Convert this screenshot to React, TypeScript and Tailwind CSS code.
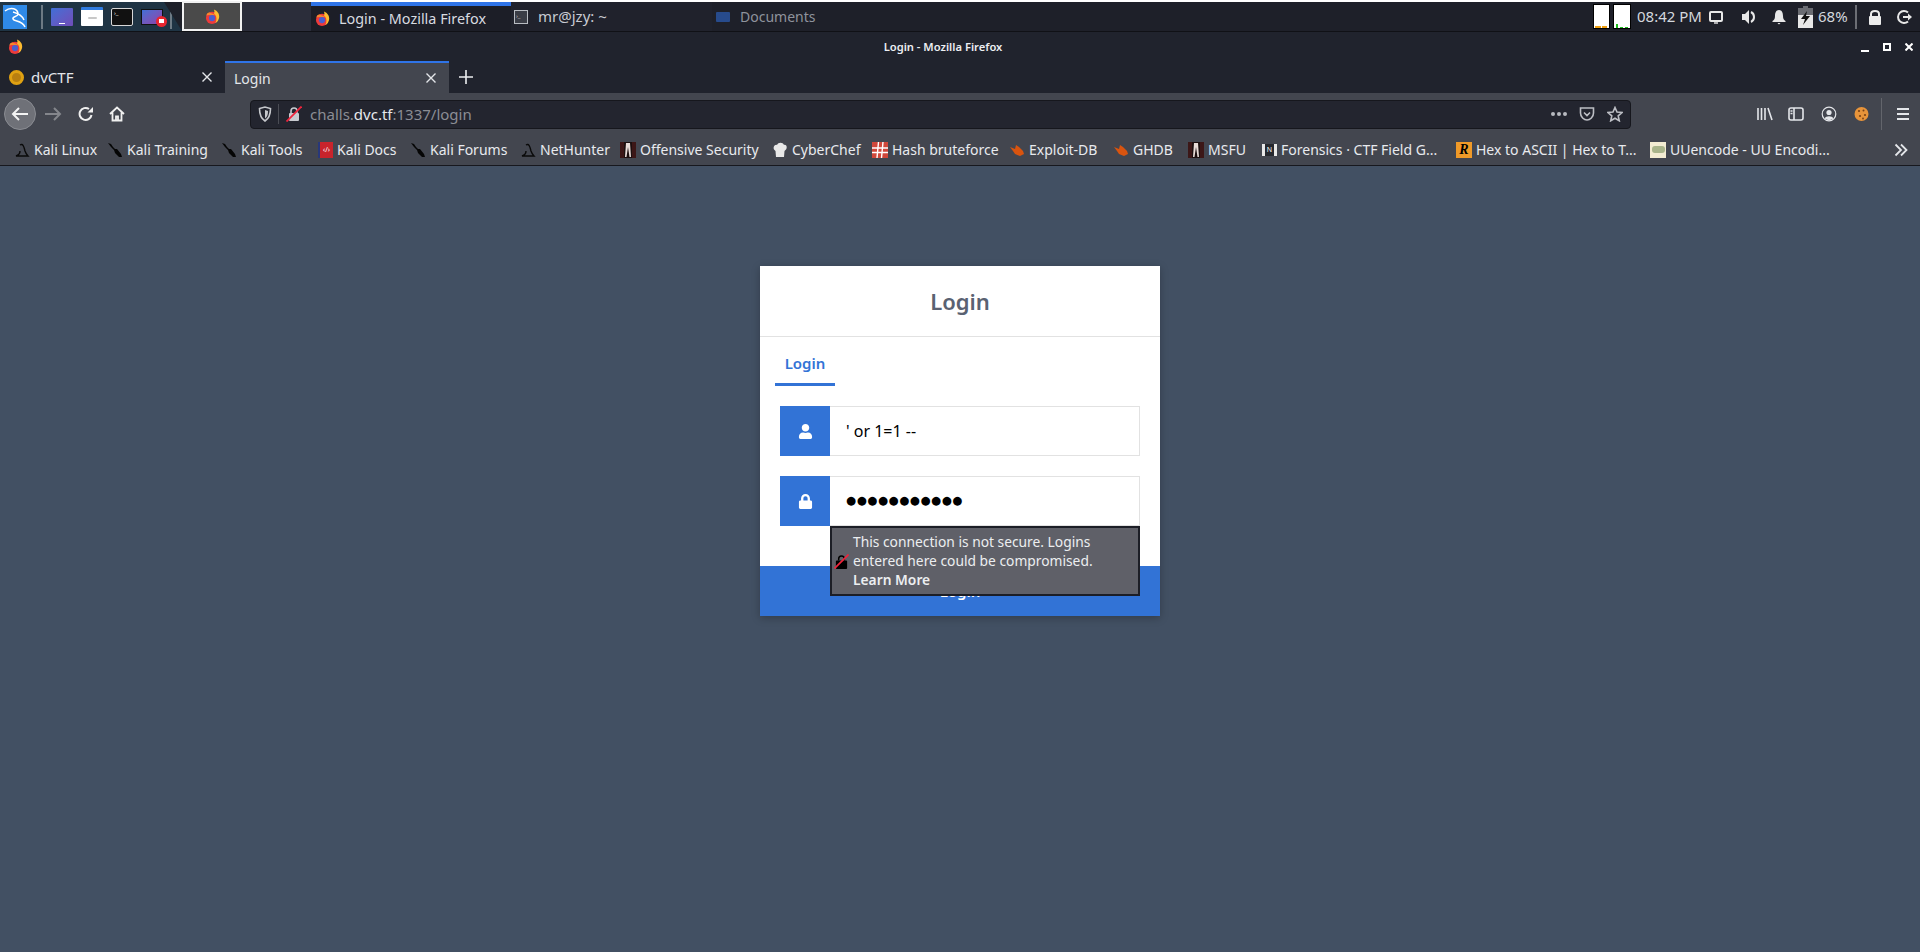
import type { ReactNode } from "react";
import { FaLock, FaUser } from "react-icons/fa";

const uiFont = "font-['Noto_Sans',sans-serif]";

const FirefoxIcon = ({ size = 16 }: { size?: number }) => (
  <svg width={size} height={size} viewBox="0 0 16 16" className="shrink-0">
    <circle cx="7.500" cy="9.500" r="6.500" fill="#ee3b3b" />
    <path d="M1.500 7 C2 4 4 3.500 5.500 4 C7 5 10 5 12 7 C10 6.500 5 6 1.500 7Z" fill="#f8862c" />
    <path d="M9.500 0.500 C13.500 2 16.500 6 14.500 11 C13.500 14 12 14.500 11 15 C13 11 12.500 7 9.500 4.500 C10.500 3.500 10 2 9.500 0.500Z" fill="#fdbb30" />
    <circle cx="7.500" cy="9.700" r="3.300" fill="#4a5fd0" />
  </svg>
);

const KaliSword = () => (
  <svg width="16" height="16" viewBox="0 0 16 16" className="shrink-0">
    <path d="M1 1 L4 2 L6 5 L8 7 L10 7 L14 12 L15 15 L12 15 L8 11 L7 8 L4 5 Z" fill="#050505" />
  </svg>
);

const KaliHat = () => (
  <svg width="16" height="16" viewBox="0 0 16 16" className="shrink-0" fill="none">
    <path d="M6 3 C9 1 10 5 11 9 C12 12 13 13 14 14 L2 14 C5 13 6 11 6 9" stroke="#0a0a0a" strokeWidth="1.400" />
  </svg>
);

const StripedIcon = () => (
  <svg width="16" height="16" viewBox="0 0 16 16" className="shrink-0">
    <rect width="16" height="16" fill="#1c0f0f" />
    <path d="M6 1 H10 L11 15 H9.500 L8 5 L6.500 15 H5 Z" fill="#e8dcd8" />
    <path d="M1 0 V16 M3 0 V16 M13 0 V16 M15 0 V16" stroke="#5c2020" />
  </svg>
);

const ExploitIcon = () => (
  <svg width="16" height="16" viewBox="0 0 16 16" className="shrink-0">
    <path d="M1 5 L6 7 L7 3 L10 5 L14 9 L15 12 L11 14 L6 12 L4 9 Z" fill="#d9540f" />
  </svg>
);

const Bookmark = ({ icon, label, width }: { icon: ReactNode; label: string; width: string }) => (
  <div className={`flex items-center gap-[4px] shrink-0 ${width}`}>
    {icon}
    <span className="text-[14px] text-[#e8eaee] whitespace-nowrap">{label}</span>
  </div>
);

const TopPanel = () => (
  <div className="flex h-[32px] border-t-2 border-white bg-[#1e2029] shrink-0 border-b border-b-[#101116]">
    <div className="flex items-center w-[182px] bg-[#1f3444] [clip-path:polygon(0_0,164px_0,182px_100%,0_100%)]">
      <svg width="24" height="24" viewBox="0 0 24 24" className="ml-[3px] shrink-0">
        <rect width="24" height="24" fill="#2f8ae8" />
        <path d="M2 6 C8 1 15 4 15 9 C15 12 9 11 10 14 C11 17 19 15 22 22 M10 7 C14 8 19 10 21 15" fill="none" stroke="#fff" strokeWidth="1.500" />
      </svg>
      <div className="w-[2px] h-[24px] bg-[#6d7a84] ml-[14px]" />
      <div className="flex items-end justify-center w-[22px] h-[18px] ml-[8px] rounded-[1px] bg-gradient-to-br from-[#3d6fd6] to-[#6f4cb8] pb-[2px]">
        <div className="w-[6px] h-[1px] bg-white" />
      </div>
      <div className="flex items-center justify-center w-[22px] h-[19px] ml-[8px] bg-white rounded-[1px] border-t-[3px] border-[#2f7be0]">
        <div className="w-[9px] h-[2px] rounded-full bg-[#c8c8c8]" />
      </div>
      <div className="w-[22px] h-[18px] ml-[8px] bg-[#111] rounded-[2px] border border-[#d8d8d8] text-[6px] leading-[8px] text-white pl-[2px]">›_</div>
      <div className="relative w-[22px] h-[16px] ml-[8px] bg-gradient-to-br from-[#3d6fd6] to-[#8a3fa8] border border-[#111]">
        <div className="absolute -right-[5px] top-[6px] flex items-center justify-center w-[11px] h-[11px] rounded-full bg-[#e8252f]">
          <div className="w-[5px] h-[4px] bg-white" />
        </div>
      </div>
      <div className="w-[2px] h-[24px] bg-[#6d7a84] ml-[7px]" />
    </div>
    <div className="flex w-[60px] items-center justify-center bg-[#4a4a4a] border-2 border-[#f2f2f2] -mt-[1px]">
      <FirefoxIcon size={15} />
    </div>
    <div className="w-[69px] bg-[#2b2d3a]" />
    <div className="flex items-center w-[200px] border-t-4 border-[#2f74e8] pl-[4px] gap-[9px] bg-[#1c1e27]">
      <FirefoxIcon size={15} />
      <span className="text-[14.4px] text-[#d8dbe0] whitespace-nowrap">Login - Mozilla Firefox</span>
    </div>
    <div className="flex items-center w-[201px] pl-[3px] gap-[10px] bg-[#20222c]">
      <div className="w-[14px] h-[14px] border border-[#b8bcc2] bg-[#3a3d46] text-[6px] leading-[10px] text-[#d0d0d0] pl-[1px]">›_</div>
      <span className="text-[15px] text-[#c8cbd2]">mr@jzy: ~</span>
    </div>
    <div className="flex items-center pl-[4px] gap-[10px]">
      <div className="w-[14px] h-[10px] bg-[#274b8c] rounded-[1px]" />
      <span className="text-[14px] text-[#8f939c]">Documents</span>
    </div>
    <div className="ml-auto flex items-center">
      <div className="w-[17px] h-[25px] bg-white border border-black flex items-end">
        <div className="h-[2px] w-[6px] bg-[#f0a010] ml-[1px]" />
        <div className="h-[2px] w-[5px] bg-[#f0a010] ml-[1px]" />
      </div>
      <div className="w-[18px] h-[25px] bg-white border border-black ml-[3px] flex items-end gap-[2px]">
        <div className="h-[4px] w-[2px] bg-[#20c020] ml-[2px]" />
        <div className="h-[1px] w-[3px] bg-[#20c020]" />
        <div className="h-[1px] w-[3px] bg-[#20c020]" />
      </div>
      <span className="ml-[6px] text-[15px] text-[#d4d8de] whitespace-nowrap w-[70px]">08:42 PM</span>
      <svg width="16" height="16" viewBox="0 0 16 16" className="ml-[1px]" fill="none">
        <rect x="2" y="3" width="12" height="9" rx="1" stroke="#e8e8e8" strokeWidth="2" />
        <path d="M6 14 H10" stroke="#e8e8e8" strokeWidth="1.400" />
      </svg>
      <svg width="16" height="16" viewBox="0 0 16 16" className="ml-[17px]">
        <path d="M1 5 H4 L8 1 V15 L4 11 H1 Z" fill="#e8e8e8" />
        <path d="M10 3 C14 5 14 11 10 13" fill="none" stroke="#e8e8e8" strokeWidth="2" />
      </svg>
      <svg width="16" height="16" viewBox="0 0 16 16" className="ml-[14px]">
        <path d="M8 1 C5 1 4 4 4 7 C4 10 3 11 1.500 12 V13 H14.500 V12 C13 11 12 10 12 7 C12 4 11 1 8 1 Z M6.500 14 H9.500 L8 15.500 Z" fill="#e8e8e8" />
      </svg>
      <svg width="15" height="22" viewBox="0 0 15 22" className="ml-[11px]">
        <path d="M5 0 H10 V2 H15 V22 H0 V2 H5 Z" fill="#6a6c72" />
        <path d="M0 9 H15 V22 H0 Z" fill="#e8e8e8" />
        <path d="M9 5 L3 13 H7 L5 19 L12 10 H8 Z" fill="#111" />
      </svg>
      <span className="ml-[5px] text-[15px] text-[#d4d8de] w-[36px]">68%</span>
      <div className="w-[2px] h-[24px] bg-[#6c6e74] ml-[1px]" />
      <svg width="14" height="16" viewBox="0 0 14 16" className="ml-[11px]">
        <path d="M3 7 V5 C3 1 11 1 11 5 V7" fill="none" stroke="#ececec" strokeWidth="2" />
        <rect x="1" y="7" width="12" height="9" rx="1" fill="#ececec" />
      </svg>
      <svg width="16" height="16" viewBox="0 0 16 16" className="ml-[15px] mr-[7px]" fill="none">
        <path d="M11 3.500 A6 6 0 1 0 11 12.500" stroke="#e8e8e8" strokeWidth="2" />
        <path d="M6 8 H12" stroke="#e8e8e8" strokeWidth="2" />
        <path d="M11 4.500 L15 8 L11 11.500 Z" fill="#e8e8e8" />
      </svg>
    </div>
  </div>
);

const TitleBar = () => (
  <div className="relative flex items-center h-[28px] bg-[#20232d] shrink-0 pl-[8px]">
    <FirefoxIcon size={15} />
    <span className="absolute left-0 right-[34px] top-[7px] text-center text-[11.2px] font-semibold text-[#eceef2]">Login - Mozilla Firefox</span>
    <div className="ml-auto flex items-center mr-[7px] mt-[2px]">
      <div className="w-[8px] h-[2px] bg-white mt-[7px]" />
      <div className="w-[8px] h-[8px] border-2 border-white ml-[14px]" />
      <svg width="8" height="8" viewBox="0 0 8 8" className="ml-[14px]">
        <path d="M0.500 0.500 L7.500 7.500 M7.500 0.500 L0.500 7.500" stroke="#fff" strokeWidth="2" />
      </svg>
    </div>
  </div>
);

const CloseGlyph = () => (
  <svg width="10" height="10" viewBox="0 0 10 10">
    <path d="M0.500 0.500 L9.500 9.500 M9.500 0.500 L0.500 9.500" stroke="#e4e6ea" strokeWidth="1.400" />
  </svg>
);

const TabStrip = () => (
  <div className="flex h-[33px] bg-[#20232d] shrink-0 border-t border-[#20232d]">
    <div className="flex items-center w-[225px] pl-[9px] pr-[13px]">
      <div className="w-[15px] h-[15px] rounded-full bg-[#b87f10] border-[3px] border-[#dfa112]" />
      <span className="ml-[7px] text-[15px] text-[#e4e6ea]">dvCTF</span>
      <div className="ml-auto"><CloseGlyph /></div>
    </div>
    <div className="flex items-center w-[224px] pl-[9px] pr-[13px] bg-[#43464f] border-t-2 border-[#2f74e8]">
      <span className="text-[14px] text-[#e4e6ea]">Login</span>
      <div className="ml-auto"><CloseGlyph /></div>
    </div>
    <svg width="14" height="14" viewBox="0 0 14 14" className="ml-[10px] self-center">
      <path d="M7 0 V14 M0 7 H14" stroke="#eceef0" strokeWidth="1.600" />
    </svg>
  </div>
);

const Toolbar = () => (
  <div className="flex items-center h-[38px] bg-[#43464f] shrink-0 pl-[4px] pt-[4px]">
    <div className="flex items-center justify-center w-[32px] h-[32px] rounded-full bg-[#6f7178] border border-[#8a8c92]">
      <svg width="18" height="16" viewBox="0 0 18 16" fill="none" stroke="#f4f4f4" strokeWidth="2">
        <path d="M17 8 H2 M8 2 L2 8 L8 14" />
      </svg>
    </div>
    <svg width="18" height="16" viewBox="0 0 18 16" fill="none" stroke="#84868c" strokeWidth="2" className="ml-[8px]">
      <path d="M1 8 H16 M10 2 L16 8 L10 14" />
    </svg>
    <svg width="16" height="16" viewBox="0 0 16 16" fill="none" className="ml-[16px]">
      <path d="M13.500 9 A6 6 0 1 1 11 3" stroke="#f0f0f0" strokeWidth="2" />
      <path d="M9.500 6.500 H15 V1 Z" fill="#f0f0f0" />
    </svg>
    <svg width="16" height="16" viewBox="0 0 16 16" fill="none" stroke="#f0f0f0" strokeWidth="1.800" className="ml-[15px]">
      <path d="M1 8 L8 1.500 L15 8 M3.500 6.500 V14.500 H12.500 V6.500 M7 14.500 V10.500 H9 V14.500" />
    </svg>
    <div className="flex items-center w-[1381px] h-[29px] ml-[125px] bg-[#23252f] rounded-[4px] border border-[#16171d] pl-[7px] pr-[7px]">
      <svg width="14" height="16" viewBox="0 0 14 16" fill="none">
        <path d="M1.500 2.500 L7 1 L12.500 2.500 C12.500 9 11 12.500 7 15 C3 12.500 1.500 9 1.500 2.500 Z" stroke="#c6c8cc" strokeWidth="1.600" />
        <path d="M7 4 L10 5 C10 9 9 11 7 12.500 Z" fill="#c6c8cc" />
      </svg>
      <div className="w-[1px] h-[20px] bg-[#4b4d55] ml-[6px]" />
      <svg width="16" height="16" viewBox="0 0 16 16" className="ml-[7px]">
        <path d="M5 7 V5 C5 1 11 1 11 5 V7" fill="none" stroke="#c8cad0" strokeWidth="1.600" />
        <rect x="3" y="7" width="10" height="8" rx="1" fill="#c8cad0" />
        <path d="M0.500 15.500 L15.500 0.500" stroke="#f0243c" strokeWidth="1.800" />
      </svg>
      <span className="ml-[8px] text-[15px] text-[#8b8d94] whitespace-nowrap">
        challs.<span className="text-[#e6e8ec]">dvc.tf</span>:1337/login
      </span>
      <div className="ml-auto flex items-center">
        <div className="flex gap-[2px]">
          <div className="w-[4px] h-[4px] rounded-full bg-[#b8bac0]" />
          <div className="w-[4px] h-[4px] rounded-full bg-[#b8bac0]" />
          <div className="w-[4px] h-[4px] rounded-full bg-[#b8bac0]" />
        </div>
        <svg width="16" height="16" viewBox="0 0 16 16" fill="none" stroke="#bcbec4" strokeWidth="1.600" className="ml-[12px]">
          <path d="M1.500 2 H14.500 V7 C14.500 11 11 14 8 14 C5 14 1.500 11 1.500 7 Z M5 6.500 L8 9.500 L11 6.500" />
        </svg>
        <svg width="16" height="16" viewBox="0 0 16 16" fill="none" stroke="#bcbec4" strokeWidth="1.600" className="ml-[12px]">
          <path d="M8 1.500 L10 6 L15 6.500 L11.200 9.800 L12.300 14.800 L8 12.200 L3.700 14.800 L4.800 9.800 L1 6.500 L6 6 Z" />
        </svg>
      </div>
    </div>
    <div className="flex items-center ml-[126px]">
      <svg width="16" height="16" viewBox="0 0 16 16" fill="none" stroke="#e4e6ea" strokeWidth="1.600">
        <path d="M1 2 V14 M4.500 2 V14 M8 2 V14 M11 2 L15 14" />
      </svg>
      <svg width="16" height="16" viewBox="0 0 16 16" fill="none" stroke="#e4e6ea" strokeWidth="1.600" className="ml-[15px]">
        <rect x="1" y="2" width="14" height="12" rx="2" />
        <path d="M6 2 V14 M2.500 5 H4.500 M2.500 7.500 H4.500" />
      </svg>
      <svg width="16" height="16" viewBox="0 0 16 16" fill="none" className="ml-[17px]">
        <circle cx="8" cy="8" r="6.800" stroke="#e4e6ea" strokeWidth="1.200" />
        <circle cx="8" cy="6.500" r="2.600" fill="#e4e6ea" />
        <path d="M3.500 12.500 C5 9.500 11 9.500 12.500 12.500 L8 14.500 Z" fill="#e4e6ea" />
      </svg>
      <svg width="15" height="16" viewBox="0 0 15 16" className="ml-[17px]">
        <circle cx="7.500" cy="8" r="7" fill="#e8943a" />
        <circle cx="5" cy="5" r="1.100" fill="#7a4214" />
        <circle cx="9.500" cy="4.500" r="1" fill="#7a4214" />
        <circle cx="11" cy="9" r="1.100" fill="#7a4214" />
        <circle cx="6" cy="10" r="1.100" fill="#7a4214" />
        <circle cx="9" cy="12.500" r="0.900" fill="#7a4214" />
      </svg>
      <div className="w-[1px] h-[32px] bg-[#63656c] ml-[12px]" />
      <svg width="12" height="14" viewBox="0 0 12 14" stroke="#e4e6ea" strokeWidth="2" className="ml-[15px]">
        <path d="M0 2 H12 M0 7 H12 M0 12 H12" />
      </svg>
    </div>
  </div>
);

const BookmarksBar = () => (
  <div className="flex items-center h-[35px] pt-[3px] bg-[#43464f] border-b border-[#17181e] shrink-0 pl-[14px]">
    <Bookmark width="w-[93px]" icon={<KaliHat />} label="Kali Linux" />
    <Bookmark width="w-[114px]" icon={<KaliSword />} label="Kali Training" />
    <Bookmark width="w-[97px]" icon={<KaliSword />} label="Kali Tools" />
    <Bookmark
      width="w-[92px]"
      icon={
        <div className="w-[15px] h-[16px] bg-[#c8242c] border-l-2 border-[#28387a] text-[7px] leading-[16px] text-center text-white shrink-0">‹/›</div>
      }
      label="Kali Docs"
    />
    <Bookmark width="w-[110px]" icon={<KaliSword />} label="Kali Forums" />
    <Bookmark width="w-[100px]" icon={<KaliHat />} label="NetHunter" />
    <Bookmark width="w-[152px]" icon={<StripedIcon />} label="Offensive Security" />
    <Bookmark
      width="w-[100px]"
      icon={
        <svg width="16" height="16" viewBox="0 0 16 16" className="shrink-0">
          <path d="M4 15 L3.500 9 C0 7 2 2 5 3 C6 0 11 0 12 3 C15 2 16 7 12.500 9 L12 15 Z" fill="#e8e8e8" />
        </svg>
      }
      label="CyberChef"
    />
    <Bookmark
      width="w-[137px]"
      icon={
        <svg width="16" height="16" viewBox="0 0 16 16" className="shrink-0">
          <rect width="16" height="16" fill="#d0473a" />
          <path d="M0 6 H16 M0 10.500 H16 M6.500 0 L5 16 M11 0 L9.500 16" stroke="#fff" strokeWidth="1.400" />
        </svg>
      }
      label="Hash bruteforce"
    />
    <Bookmark width="w-[104px]" icon={<ExploitIcon />} label="Exploit-DB" />
    <Bookmark width="w-[75px]" icon={<ExploitIcon />} label="GHDB" />
    <Bookmark width="w-[74px]" icon={<StripedIcon />} label="MSFU" />
    <Bookmark
      width="w-[194px]"
      icon={<div className="w-[15px] h-[12px] shrink-0 border-x-[3px] border-[#e8e8e8] bg-[#26282e] text-[7px] leading-[12px] text-center text-white">N</div>}
      label="Forensics · CTF Field G..."
    />
    <Bookmark
      width="w-[194px]"
      icon={<div className="w-[16px] h-[16px] shrink-0 bg-[#f09a28] text-black text-[14px] leading-[16px] font-bold italic text-center font-['Liberation_Serif',serif]">R</div>}
      label="Hex to ASCII | Hex to T..."
    />
    <Bookmark
      width="w-[244px]"
      icon={
        <div className="w-[16px] h-[16px] shrink-0 bg-[#f3ecd2] flex items-center justify-center">
          <div className="w-[13px] h-[7px] rounded-[3px] bg-[#a9b48a]" />
        </div>
      }
      label="UUencode - UU Encodi..."
    />
    <svg width="14" height="14" viewBox="0 0 14 14" fill="none" stroke="#e4e6ea" strokeWidth="1.800">
      <path d="M1.500 1.500 L7 7 L1.500 12.500 M7 1.500 L12.500 7 L7 12.500" />
    </svg>
  </div>
);

const FieldRow = ({ icon, children }: { icon: ReactNode; children: ReactNode }) => (
  <div className="flex h-[50px]">
    <div className="flex items-center justify-center w-[50px] bg-[#3273d6] text-white text-[15px] shrink-0">{icon}</div>
    <div className="flex items-center flex-1 pl-[16px] border border-[#e2e2e2] border-l-0 text-[16px] text-black">{children}</div>
  </div>
);

const LoginCard = () => (
  <div className="relative w-[400px] mx-auto bg-white shadow-[0_2px_8px_rgba(0,0,0,0.25)]">
    <div className="flex items-center justify-center h-[71px] border-b border-[#e2e2e2]">
      <span className="text-[22px] font-semibold text-[#5a6272]">Login</span>
    </div>
    <div className="px-[15px] h-[49px]">
      <div className="flex items-center justify-center w-[60px] h-[49px] pt-[6px] border-b-[3px] border-[#3273d6]">
        <span className="text-[15px] font-semibold text-[#3273d6]">Login</span>
      </div>
    </div>
    <div className="flex flex-col gap-[20px] px-[20px] pt-[20px]">
      <FieldRow icon={<FaUser />}>' or 1=1 --</FieldRow>
      <FieldRow icon={<FaLock />}>
        <span className="text-[11.5px] leading-none tracking-[0.6px] font-['DejaVu_Sans',sans-serif]">●●●●●●●●●●●</span>
      </FieldRow>
    </div>
    <div className="flex items-center justify-center h-[50px] mt-[40px] bg-[#3273d6] text-white text-[15px] font-semibold">Login</div>
    <div className="absolute left-[70px] top-[260px] flex items-center w-[310px] h-[70px] bg-[#5f6068] border-2 border-[#1c1e26] pl-[2px]">
      <svg width="15" height="15" viewBox="0 0 16 16" className="shrink-0">
        <path d="M5 7 V5 C5 1 11 1 11 5 V7" fill="none" stroke="#000" strokeWidth="1.600" />
        <rect x="2" y="7" width="12" height="9" rx="1" fill="#000" />
        <path d="M0.500 15.500 L15.500 0.500" stroke="#f0243c" strokeWidth="1.800" />
      </svg>
      <p className="ml-[4px] -mt-[2px] text-[13.8px] leading-[19px] text-[#eceef0] whitespace-nowrap">
        This connection is not secure. Logins
        <br />
        entered here could be compromised.
        <br />
        <span className="font-semibold">Learn More</span>
      </p>
    </div>
  </div>
);

export default function App() {
  return (
    <div className={`flex flex-col h-screen w-full overflow-hidden ${uiFont}`}>
      <TopPanel />
      <TitleBar />
      <TabStrip />
      <Toolbar />
      <BookmarksBar />
      <main className="flex-1 bg-[#425063] pt-[100px]">
        <LoginCard />
      </main>
    </div>
  );
}
